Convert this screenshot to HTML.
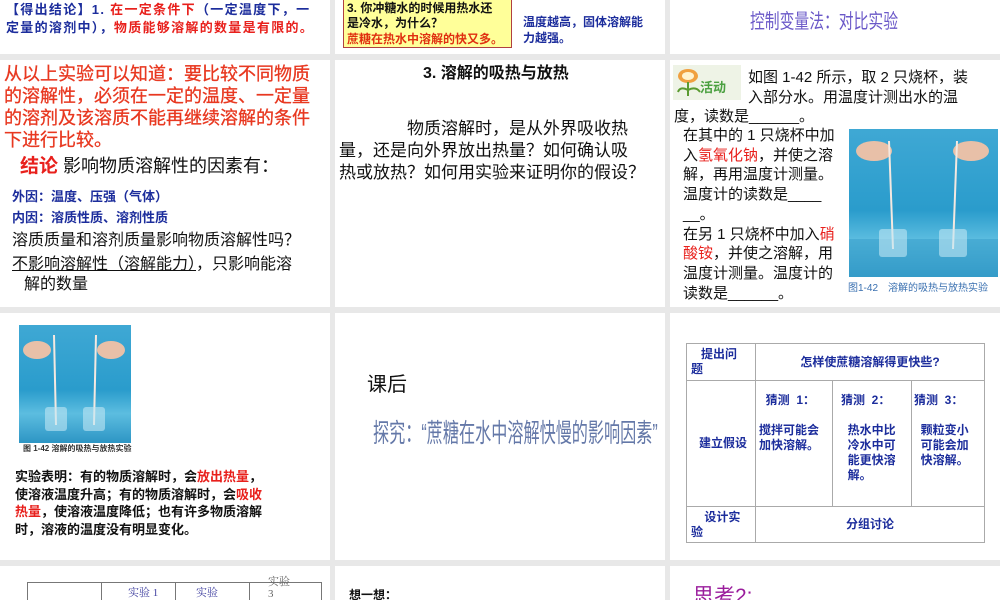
<!DOCTYPE html>
<html><head><meta charset="utf-8"><style>
*{margin:0;padding:0;box-sizing:border-box}
body{width:1000px;height:600px;background:#e8e8e8;position:relative;overflow:hidden;font-family:"Liberation Sans","Noto Sans CJK SC",sans-serif}
.p{position:absolute;background:#fff;overflow:hidden}
.a{position:absolute;white-space:nowrap}
.b{font-weight:bold}
.r{color:#e8201c}
.n{color:#1c2d9c}
.photo{position:absolute;background:linear-gradient(180deg,#3fa8d4 0%,#2a9ccc 55%,#5cbde0 75%,#2d95c4 100%)}
table{border-collapse:collapse;table-layout:fixed}
td{overflow:hidden}
</style></head><body>

<!-- Row 1 -->
<div class="p" style="left:0;top:0;width:330px;height:54px">
  <div class="a b" style="left:6px;top:1px;font-size:13px;letter-spacing:1.3px;line-height:18px;color:#1c2d9c">【得出结论】1. <span class="r">在一定条件下</span>（一定温度下，一</div>
  <div class="a b" style="left:6px;top:19px;font-size:13px;letter-spacing:1.3px;line-height:18px;color:#1c2d9c">定量的溶剂中），<span class="r">物质能够溶解的数量是有限的。</span></div>
</div>
<div class="p" style="left:335px;top:0;width:330px;height:54px">
  <div class="a" style="left:8px;top:-2px;width:169px;height:50px;background:#ffff99;border:1px solid #b04040"></div>
  <div class="a b" style="left:12px;top:1px;font-size:12px;line-height:15px;color:#111">3. 你冲糖水的时候用热水还</div>
  <div class="a b" style="left:12px;top:16px;font-size:12px;line-height:15px;color:#111">是冷水，为什么？</div>
  <div class="a b" style="left:12px;top:32px;font-size:12px;line-height:15px;color:#e03010">蔗糖在热水中溶解的快又多。</div>
  <div class="a b n" style="left:188px;top:14px;font-size:12px;line-height:16px">温度越高，固体溶解能</div>
  <div class="a b n" style="left:188px;top:30px;font-size:12px;line-height:16px">力越强。</div>
</div>
<div class="p" style="left:670px;top:0;width:330px;height:54px">
  <div class="a" style="left:80px;top:10px;font-size:20px;line-height:24px;color:#6a58c8;transform:scaleX(.74);transform-origin:left top">控制变量法：对比实验</div>
</div>

<!-- Row 2 -->
<div class="p" style="left:0;top:60px;width:330px;height:247px">
  <div class="a" style="left:4px;top:3px;font-size:18px;line-height:22px;color:#e83820;-webkit-text-stroke:0.3px #e83820">从以上实验可以知道：要比较不同物质<br>的溶解性，必须在一定的温度、一定量<br>的溶剂及该溶质不能再继续溶解的条件<br>下进行比较。</div>
  <div class="a" style="left:20px;top:94px;font-size:18px;line-height:24px;color:#111"><span class="r b" style="font-size:19px">结论</span> 影响物质溶解性的因素有：</div>
  <div class="a b n" style="left:12px;top:128px;font-size:13px;line-height:18px">外因：温度、压强（气体）</div>
  <div class="a b n" style="left:12px;top:149px;font-size:13px;line-height:18px">内因：溶质性质、溶剂性质</div>
  <div class="a" style="left:12px;top:171px;font-size:16px;line-height:20px;color:#111">溶质质量和溶剂质量影响物质溶解性吗？</div>
  <div class="a" style="left:12px;top:195px;font-size:16px;line-height:20px;color:#111"><span style="text-decoration:underline">不影响溶解性（溶解能力）</span>，只影响能溶</div>
  <div class="a" style="left:24px;top:215px;font-size:16px;line-height:20px;color:#111">解的数量</div>
</div>
<div class="p" style="left:335px;top:60px;width:330px;height:247px">
  <div class="a b" style="left:88px;top:4px;font-size:16px;line-height:20px;color:#111">3. 溶解的吸热与放热</div>
  <div class="a" style="left:72px;top:58px;font-size:17px;line-height:22px;color:#111">物质溶解时，是从外界吸收热</div>
  <div class="a" style="left:4px;top:80px;font-size:17px;line-height:22px;color:#111">量，还是向外界放出热量？如何确认吸</div>
  <div class="a" style="left:4px;top:102px;font-size:17px;line-height:22px;color:#111">热或放热？如何用实验来证明你的假设？</div>
</div>
<div class="p" style="left:670px;top:60px;width:330px;height:247px">
  <div class="a" style="left:3px;top:5px;width:68px;height:35px;background:#eef3e6"></div>
  <svg class="a" style="left:4px;top:6px" width="36" height="32" viewBox="0 0 36 32"><ellipse cx="14" cy="10" rx="10" ry="7" fill="#f0a040"/><ellipse cx="14" cy="10" rx="6" ry="4" fill="#fff3d0"/><path d="M14 16 L14 30 M14 24 Q6 20 4 26 M14 24 Q22 20 26 26" stroke="#5a9a30" stroke-width="2" fill="none"/></svg>
  <div class="a b" style="left:30px;top:17px;font-size:13px;color:#4aa040">活动</div>
  <div class="a" style="left:78px;top:8px;font-size:15px;line-height:19px;color:#111">如图 1-42 所示，取 2 只烧杯，装</div>
  <div class="a" style="left:78px;top:28px;font-size:15px;line-height:19px;color:#111">入部分水。用温度计测出水的温</div>
  <div class="a" style="left:4px;top:47px;font-size:15px;line-height:19px;color:#111">度，读数是______。</div>
  <div class="a" style="left:13px;top:66px;font-size:15px;line-height:19.7px;color:#111">在其中的 1 只烧杯中加<br>入<span class="r">氢氧化钠</span>，并使之溶<br>解，再用温度计测量。<br>温度计的读数是____<br>__。<br>在另 1 只烧杯中加入<span class="r">硝</span><br><span class="r">酸铵</span>，并使之溶解，用<br>温度计测量。温度计的<br>读数是______。</div>
  <div class="photo" style="left:179px;top:69px;width:149px;height:148px"></div>
  <svg class="a" style="left:179px;top:69px" width="149" height="148"><rect x="0" y="110" width="149" height="38" fill="#3aa0cc" opacity=".6"/><ellipse cx="25" cy="22" rx="18" ry="10" fill="#e8c0a8"/><ellipse cx="122" cy="22" rx="18" ry="10" fill="#e8c0a8"/><line x1="40" y1="12" x2="44" y2="120" stroke="#f4e8e0" stroke-width="2"/><line x1="108" y1="12" x2="104" y2="120" stroke="#f4e8e0" stroke-width="2"/><rect x="30" y="100" width="28" height="28" rx="3" fill="#bfe6f4" opacity=".6"/><rect x="90" y="100" width="28" height="28" rx="3" fill="#bfe6f4" opacity=".6"/></svg>
  <div class="a" style="left:178px;top:219px;font-size:10px;color:#3a70b0">图1-42　溶解的吸热与放热实验</div>
</div>

<!-- Row 3 -->
<div class="p" style="left:0;top:313px;width:330px;height:247px">
  <div class="photo" style="left:19px;top:12px;width:112px;height:118px"></div>
  <svg class="a" style="left:19px;top:12px" width="112" height="118"><ellipse cx="18" cy="25" rx="14" ry="9" fill="#e8c0a8"/><ellipse cx="92" cy="25" rx="14" ry="9" fill="#e8c0a8"/><line x1="35" y1="10" x2="37" y2="100" stroke="#f4e8e0" stroke-width="2"/><line x1="77" y1="10" x2="75" y2="100" stroke="#f4e8e0" stroke-width="2"/><rect x="26" y="82" width="22" height="24" rx="3" fill="#bfe6f4" opacity=".6"/><rect x="64" y="82" width="22" height="24" rx="3" fill="#bfe6f4" opacity=".6"/></svg>
  <div class="a b" style="left:23px;top:130px;font-size:8px;color:#333">图 1-42 溶解的吸热与放热实验</div>
  <div class="a b" style="left:15px;top:155px;font-size:13px;line-height:17.5px;color:#111">实验表明：有的物质溶解时，会<span class="r">放出热量</span>，<br>使溶液温度升高；有的物质溶解时，会<span class="r">吸收</span><br><span class="r">热量</span>，使溶液温度降低；也有许多物质溶解<br>时，溶液的温度没有明显变化。</div>
</div>
<div class="p" style="left:335px;top:313px;width:330px;height:247px">
  <div class="a" style="left:32px;top:59px;font-size:20px;line-height:26px;color:#111">课后</div>
  <div class="a" style="left:38px;top:104px;font-size:26px;line-height:32px;color:#6478a8;transform:scaleX(.62);transform-origin:left top">探究：“蔗糖在水中溶解快慢的影响因素”</div>
</div>
<div class="p" style="left:670px;top:313px;width:330px;height:247px">
  <table class="a b n" style="left:16px;top:30px;width:298px;height:199px;font-size:12px;line-height:15px;border:1px solid #888">
    <colgroup><col style="width:69px"><col style="width:77px"><col style="width:79px"><col style="width:73px"></colgroup>
    <tr style="height:37px"><td style="border:1px solid #aaa;padding:0 4px;vertical-align:middle">&nbsp;&nbsp;&nbsp;提出问<br>题</td><td colspan="3" style="border:1px solid #aaa;text-align:center">怎样使蔗糖溶解得更快些?</td></tr>
    <tr style="height:126px"><td style="border:1px solid #aaa;padding-left:12px">建立假设</td>
      <td style="border:1px solid #aaa;vertical-align:top;padding:12px 3px;white-space:normal">&nbsp;&nbsp;猜测&nbsp;&nbsp;1：<br><br>搅拌可能会<br>加快溶解。</td>
      <td style="border:1px solid #aaa;vertical-align:top;padding:12px 2px 0 8px">猜测&nbsp;&nbsp;2：<br><br>&nbsp;&nbsp;热水中比<br>&nbsp;&nbsp;冷水中可<br>&nbsp;&nbsp;能更快溶<br>&nbsp;&nbsp;解。</td>
      <td style="border:1px solid #aaa;vertical-align:top;padding:12px 2px">猜测&nbsp;&nbsp;3：<br><br>&nbsp;&nbsp;颗粒变小<br>&nbsp;&nbsp;可能会加<br>&nbsp;&nbsp;快溶解。</td></tr>
    <tr style="height:36px"><td style="border:1px solid #aaa;padding:0 4px">&nbsp;&nbsp;&nbsp;&nbsp;设计实<br>验</td><td colspan="3" style="border:1px solid #aaa;text-align:center">分组讨论</td></tr>
  </table>
</div>

<!-- Row 4 -->
<div class="p" style="left:0;top:566px;width:330px;height:34px">
  <div class="a" style="left:27px;top:16px;width:295px;height:20px;border:1px solid #777"></div>
  <div class="a" style="left:101px;top:16px;width:1px;height:20px;background:#777"></div>
  <div class="a" style="left:175px;top:16px;width:1px;height:20px;background:#777"></div>
  <div class="a" style="left:249px;top:16px;width:1px;height:20px;background:#777"></div>
  <div class="a" style="left:128px;top:18px;font-size:11px;color:#4040a0;font-family:'Liberation Serif','Noto Serif CJK SC',serif">实验 1</div>
  <div class="a" style="left:196px;top:18px;font-size:11px;color:#4040a0;font-family:'Liberation Serif','Noto Serif CJK SC',serif">实验</div>
  <div class="a" style="left:268px;top:10px;font-size:11px;line-height:12px;color:#666;font-family:'Liberation Serif','Noto Serif CJK SC',serif">实验<br>3</div>
</div>
<div class="p" style="left:335px;top:566px;width:330px;height:34px">
  <div class="a b" style="left:14px;top:20px;font-size:12px;color:#111">想一想：</div>
</div>
<div class="p" style="left:670px;top:566px;width:330px;height:34px">
  <div class="a" style="left:23px;top:14px;font-size:21px;color:#9a1c9c">思考2:</div>
</div>
</body></html>
